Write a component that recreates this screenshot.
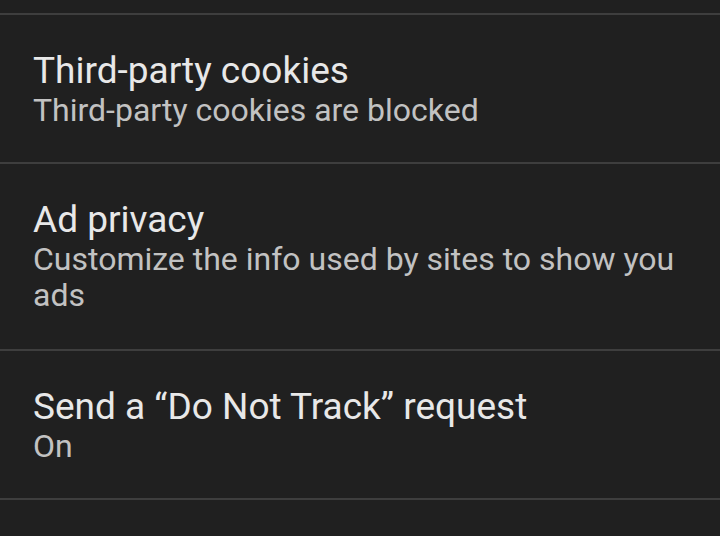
const items = [
  { title: "Third-party cookies", summary: "Third-party cookies are blocked", pb: "pb-[34px]" },
  { title: "Ad privacy", summary: "Customize the info used by sites to show you ads", pb: "pb-[36px]" },
  { title: "Send a \u201cDo Not Track\u201d request", summary: "On", pb: "pb-[34px]" },
];

export default function App() {
  return (
    <main className="min-h-screen w-[720px] h-[536px] overflow-hidden bg-[#202020] pt-[13px] font-['Roboto',sans-serif]">
      <div className="h-[2px] bg-[#3e3e3e]" />
      {items.map((item) => (
        <div key={item.title}>
          <div className={`pl-[33px] pr-[40px] pt-[35px] ${item.pb}`}>
            <div className="text-[37px] leading-[42px] text-[#e8e8e8]">{item.title}</div>
            <div className="text-[32px] leading-[36px] text-[#c2c2c2]">{item.summary}</div>
          </div>
          <div className="h-[2px] bg-[#3e3e3e]" />
        </div>
      ))}
    </main>
  );
}
